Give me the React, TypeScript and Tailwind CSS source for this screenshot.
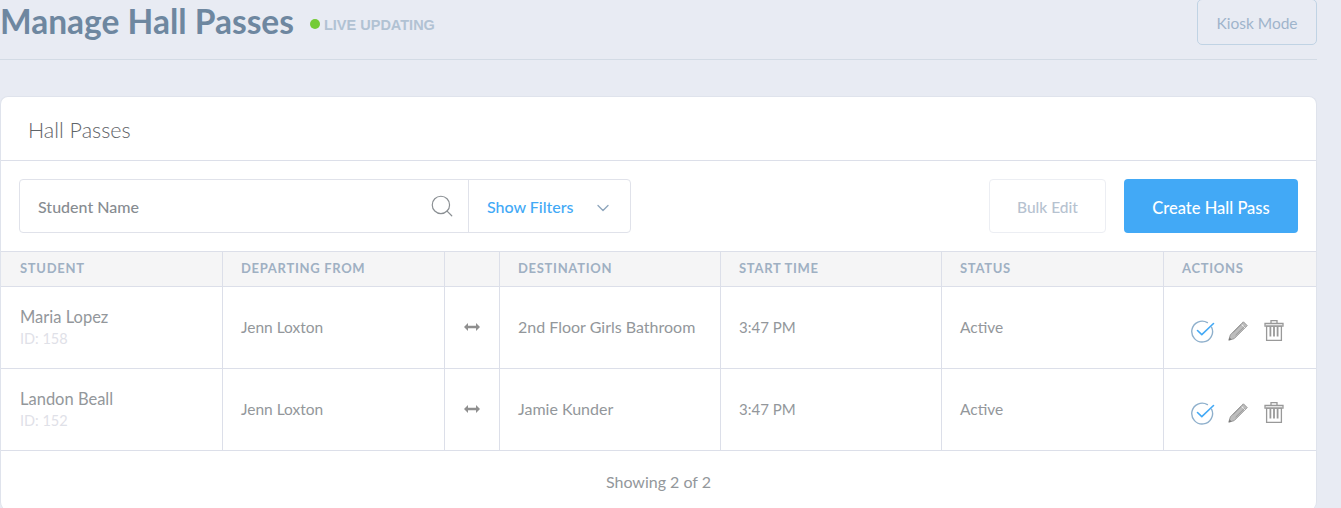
import { ChevronDown, Search } from "lucide-react";

const font = "font-['Lato','Liberation_Sans',sans-serif]";

const columns = "grid grid-cols-[222px_222px_55px_221px_221px_222px_1fr]";

const headers = ["Student", "Departing From", "", "Destination", "Start Time", "Status", "Actions"];

const passes = [
  { name: "Maria Lopez", id: 158, from: "Jenn Loxton", to: "2nd Floor Girls Bathroom", time: "3:47 PM", status: "Active" },
  { name: "Landon Beall", id: 152, from: "Jenn Loxton", to: "Jamie Kunder", time: "3:47 PM", status: "Active" },
];

const ArrowIcon = () => (
  <svg width="16" height="8" viewBox="0 0 16 8" fill="#8f8f8f">
    <path d="M0 4l4-4v2.8h8V0l4 4-4 4V5.2H4V8z" />
  </svg>
);

const CheckIcon = () => (
  <svg width="24" height="24" viewBox="0 0 24 24" fill="none">
    <path d="M20.6 8.2A10.4 10.4 0 1 1 16.4 3.6" stroke="#8fb0cc" strokeWidth="1.4" strokeLinecap="round" />
    <path d="M6.5 11.5l4.3 4.1L22.5 4.5" stroke="#42a9f6" strokeWidth="1.6" strokeLinecap="round" strokeLinejoin="round" />
  </svg>
);

const PencilIcon = () => (
  <svg width="22" height="22" viewBox="0 0 22 22" fill="none">
    <path d="M16.4 1.8l3.8 3.8L7.2 18.6 1.8 20.2l1.6-5.4z" fill="#bdbdbd" stroke="#999" strokeWidth="1" strokeLinejoin="round" />
    <path d="M14.2 4l3.8 3.8" stroke="#fff" strokeWidth="0.9" />
    <path d="M6 12.6L15.2 3.4M8.6 15.2L17.8 6" stroke="#8f8f8f" strokeWidth="0.8" />
    <path d="M1.8 20.2l.8-2.8 2 2z" fill="#777" />
  </svg>
);

const TrashIcon = () => (
  <svg width="20" height="23" viewBox="0 0 20 23" fill="none" stroke="#999" strokeWidth="1.3">
    <path d="M1 4.5h18v2.6H1z" />
    <path d="M7 4.5V1.6h6v2.9" />
    <path d="M2.6 7.1v14.3h14.8V7.1z" />
    <path d="M6.4 7.5v10M10 7.5v10M13.6 7.5v10" strokeWidth="1.8" />
  </svg>
);

export default function App() {
  return (
    <div className={`${font} h-[508px] w-[1341px] overflow-hidden bg-[#e8ebf3]`}>
      <div className="w-[1317px]">
        <div className="-mt-px flex h-[61px] items-start justify-between border-b border-[#d3dbe5]">
          <div className="flex h-[46px] items-center">
            <h1 className="text-[33.5px] leading-none font-bold text-[#6e87a0]">Manage Hall Passes</h1>
            <span className="mt-[4px] ml-[16px] h-[10px] w-[10px] rounded-full bg-[#74cb35]" />
            <span className="mt-[7px] ml-[4px] font-['Liberation_Sans',sans-serif] text-[14.5px] font-bold text-[#b1c2d3]">LIVE UPDATING</span>
          </div>
          <button className="h-[46px] w-[120px] rounded-[5px] border border-[#c0d3e4] pt-[4px] text-[15.5px] text-[#9fb4cb]">
            Kiosk Mode
          </button>
        </div>

        <div className="mt-[36px] h-[414px] rounded-[8px] border border-x-[#dfe3ec] border-t-[#dfe3ec] border-b-0 bg-white">
          <div className="flex h-[64px] items-center border-b border-[#dcdfe9] pt-[3px] pl-[27px] text-[21.5px] font-light text-[#5f6468]">
            Hall Passes
          </div>

          <div className="flex h-[90px] items-center justify-between pr-[18px] pl-[18px]">
            <div className="flex h-[54px] w-[612px] rounded-[4px] border border-[#e0e2ea]">
              <div className="flex flex-1 items-center justify-between pr-[13px] pl-[18px]">
                <span className="pt-[2px] text-[16px] font-medium text-[#878c91]">Student Name</span>
                <Search size={26} strokeWidth={1.1} className="text-[#8a8f93]" />
              </div>
              <div className="flex w-[162px] items-center justify-between border-l border-[#e0e2ea] pr-[17px] pl-[18px]">
                <span className="pt-[2px] text-[16px] font-medium text-[#42a9f6]">Show Filters</span>
                <ChevronDown size={20} strokeWidth={1.6} className="mt-[3px] text-[#8ea5bc]" />
              </div>
            </div>
            <div className="flex items-center gap-[18px]">
              <button className="h-[54px] w-[117px] rounded-[4px] border border-[#eceef3] pt-[4px] text-[15.5px] font-medium text-[#b6c2d0]">
                Bulk Edit
              </button>
              <button className="h-[54px] w-[174px] rounded-[4px] bg-[#42a9f6] pt-[4px] text-[16.5px] font-medium text-white">
                Create Hall Pass
              </button>
            </div>
          </div>

          <div className={`${columns} h-[36px] border-y border-[#dcdfe9] bg-[#f5f5f6]`}>
            {headers.map((h, i) => (
              <div
                key={i}
                className="flex items-center border-r border-[#dcdfe9] pl-[18px] text-[13px] font-bold tracking-[0.7px] text-[#9fb0c3] uppercase first:pl-[19px] last:border-r-0"
              >
                {h}
              </div>
            ))}
          </div>

          {passes.map((p) => (
            <div key={p.id} className={`${columns} h-[82px] border-b border-[#dcdfe9] text-[#93979b]`}>
              <div className="flex flex-col justify-center border-r border-[#dcdfe9] pl-[19px]">
                <span className="text-[16.5px] leading-[22px]">{p.name}</span>
                <span className="text-[14.5px] leading-[22px] text-[#dfe1e8]">ID: {p.id}</span>
              </div>
              <div className="flex items-center border-r border-[#dcdfe9] pt-[1px] pl-[18px] text-[15.5px]">{p.from}</div>
              <div className="flex items-center justify-center border-r border-[#dcdfe9] pb-[2px]">
                <ArrowIcon />
              </div>
              <div className="flex items-center border-r border-[#dcdfe9] pb-[1px] pl-[18px] text-[16px]">{p.to}</div>
              <div className="flex items-center border-r border-[#dcdfe9] pb-[1px] pl-[18px] text-[15px]">{p.time}</div>
              <div className="flex items-center border-r border-[#dcdfe9] pt-[1px] pl-[18px] text-[15.5px]">{p.status}</div>
              <div className="flex items-center pt-[6px] pl-[27px]">
                <CheckIcon />
                <span className="mr-[15px] ml-[12px]">
                  <PencilIcon />
                </span>
                <TrashIcon />
              </div>
            </div>
          ))}

          <div className="flex h-[62px] items-center justify-center text-[16px] text-[#93979b]">Showing 2 of 2</div>
        </div>
      </div>
    </div>
  );
}
